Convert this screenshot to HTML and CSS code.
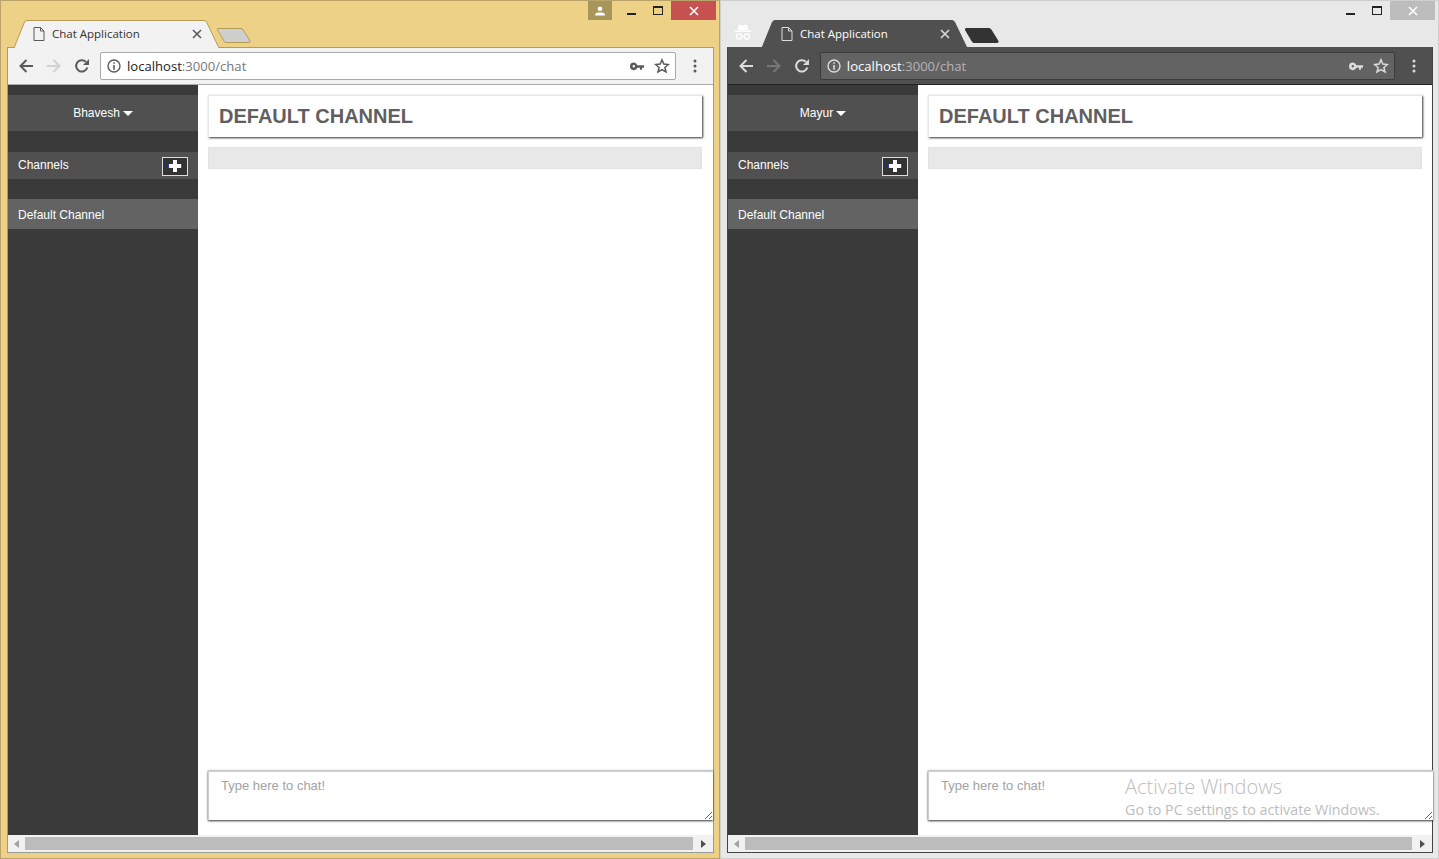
FILE: index.html
```html
<!DOCTYPE html>
<html lang="en">
<head>
  <meta charset="UTF-8" />
  <title>Chat Application</title>
  <link rel="stylesheet" href="styles.css">
</head>
<body>
  <svg class="defs" width="0" height="0">
    <symbol id="i-page" viewBox="0 0 12 14"><path d="M1 .5h6.500L11 4v9.500H1zM7.500.5V4H11" fill="none" stroke="currentColor"/></symbol>
    <symbol id="i-close" viewBox="0 0 10 10"><path d="M1 1l8 8M9 1l-8 8" fill="none" stroke="currentColor" stroke-width="1.600"/></symbol>
    <symbol id="i-back" viewBox="0 0 16 16"><path d="M15 8H3M8.500 2 2.500 8l6 6" fill="none" stroke="currentColor" stroke-width="2"/></symbol>
    <symbol id="i-forward" viewBox="0 0 16 16"><path d="M1 8h12M7.500 2l6 6-6 6" fill="none" stroke="currentColor" stroke-width="2"/></symbol>
    <symbol id="i-reload" viewBox="0 0 16 16"><path d="M13.300 9.500A5.700 5.700 0 1 1 11.800 3.800" fill="none" stroke="currentColor" stroke-width="2"/><path d="M9 7h6V1z" fill="currentColor"/></symbol>
    <symbol id="i-info" viewBox="0 0 14 14"><circle cx="7" cy="7" r="6" fill="none" stroke="currentColor" stroke-width="1.400"/><path d="M6.200 3.200h1.600v1.600H6.200zM6.200 6h1.600v4.800H6.200z" fill="currentColor"/></symbol>
    <symbol id="i-key" viewBox="0 0 14 9"><path d="M3.800.5a3.800 3.800 0 1 0 3.500 5.300H10v2h2v-2h2V3.300H7.300A3.800 3.800 0 0 0 3.800.5zm0 2.600a1.200 1.200 0 1 1 0 2.400 1.200 1.200 0 0 1 0-2.400z" fill="currentColor"/></symbol>
    <symbol id="i-star" viewBox="0 0 16 16"><path d="M8 1.800l1.800 4.300 4.600.4-3.500 3 1.100 4.500L8 11.600 4 14l1.100-4.500-3.500-3 4.600-.4z" fill="none" stroke="currentColor" stroke-width="1.500"/></symbol>
    <symbol id="i-menu" viewBox="0 0 4 14"><circle cx="2" cy="2" r="1.500" fill="currentColor"/><circle cx="2" cy="7" r="1.500" fill="currentColor"/><circle cx="2" cy="12" r="1.500" fill="currentColor"/></symbol>
    <symbol id="i-incognito" viewBox="0 0 16 16"><path d="M0 6.500h16V8H0zM2.500 6 4 .5l4 .8 4-.8L13.500 6z" fill="currentColor"/><circle cx="4" cy="12.500" r="2.700" fill="none" stroke="currentColor" stroke-width="1.300"/><circle cx="12" cy="12.500" r="2.700" fill="none" stroke="currentColor" stroke-width="1.300"/><path d="M6.500 12h3v1h-3z" fill="currentColor"/></symbol>
    <symbol id="i-person" viewBox="0 0 12 10"><circle cx="6" cy="2.700" r="2.300" fill="currentColor"/><path d="M1 9.500c0-2.500 2-3 5-3s5 .5 5 3z" fill="currentColor"/></symbol>
    <symbol id="i-plus" viewBox="0 0 14 14"><path d="M0 5h5V1h1v12H5V9H0z" fill="#2b35c8"/><path d="M14 5H9V1H8v12h1V9h5z" fill="#d22c2c"/><path d="M1 5h4V1h4v4h4v4H9v4H5V9H1z" fill="#fff"/></symbol>
  </svg>

  <div class="desktop">

    <div class="window light">
      <div class="titlebar">
        <div class="tab">
          <svg class="tab-shape" viewBox="0 0 205 28" width="205" height="28"><path d="M0 28 10.500 2Q11.300 .5 13 .5H190Q191.700 .5 192.500 2L205 28"/></svg>
          <svg class="tab-page" width="12" height="14"><use href="#i-page"/></svg>
          <span class="tab-title">Chat Application</span>
          <svg class="tab-close" width="10" height="10"><use href="#i-close"/></svg>
        </div>
        <svg class="newtab" viewBox="0 0 34 17" width="34" height="17"><path d="M1 1.500H24Q25.500 1.500 26.200 3L33 14Q33.600 15.500 32 15.500H9Q7.500 15.500 7 14L.5 3Q0 1.500 1 1.500z"/></svg>
        <div class="controls">
          <div class="ctl-profile"><svg width="12" height="10"><use href="#i-person"/></svg></div>
          <div class="ctl-min"><span></span></div>
          <div class="ctl-max"><span></span></div>
          <div class="ctl-close"><svg width="10" height="10"><use href="#i-close"/></svg></div>
        </div>
      </div>
      <div class="chrome">
        <div class="toolbar">
          <div class="tool"><svg width="16" height="16"><use href="#i-back"/></svg></div>
          <div class="tool tool-off"><svg width="16" height="16"><use href="#i-forward"/></svg></div>
          <div class="tool"><svg width="16" height="16"><use href="#i-reload"/></svg></div>
          <div class="omnibox">
            <svg class="omni-info" width="14" height="14"><use href="#i-info"/></svg>
            <span class="url"><b>localhost</b>:3000/chat</span>
            <svg class="omni-key" width="14" height="9"><use href="#i-key"/></svg>
            <svg class="omni-star" width="16" height="16"><use href="#i-star"/></svg>
          </div>
          <div class="tool-menu"><svg width="4" height="14"><use href="#i-menu"/></svg></div>
        </div>
        <div class="page">
          <aside class="sidebar">
            <div class="profile">Bhavesh <span class="caret"></span></div>
            <div class="channels-head">
              <span>Channels</span>
              <button class="add-btn"><svg width="14" height="14"><use href="#i-plus"/></svg></button>
            </div>
            <div class="channel">Default Channel</div>
          </aside>
          <main class="chat">
            <h3 class="chat-title">DEFAULT CHANNEL</h3>
            <div class="chat-notice"></div>
            <textarea class="chat-input" placeholder="Type here to chat!"></textarea>
          </main>
        </div>
        <div class="hscroll">
          <span class="arrow-left"></span>
          <div class="thumb"></div>
          <span class="arrow-right"></span>
        </div>
      </div>
    </div>

    <div class="window dark">
      <div class="titlebar">
        <svg class="incognito" width="16" height="16"><use href="#i-incognito"/></svg>
        <div class="tab">
          <svg class="tab-shape" viewBox="0 0 205 28" width="205" height="28"><path d="M0 28 10.500 2Q11.300 .5 13 .5H190Q191.700 .5 192.500 2L205 28"/></svg>
          <svg class="tab-page" width="12" height="14"><use href="#i-page"/></svg>
          <span class="tab-title">Chat Application</span>
          <svg class="tab-close" width="10" height="10"><use href="#i-close"/></svg>
        </div>
        <svg class="newtab" viewBox="0 0 34 17" width="34" height="17"><path d="M1 1.500H24Q25.500 1.500 26.200 3L33 14Q33.600 15.500 32 15.500H9Q7.500 15.500 7 14L.5 3Q0 1.500 1 1.500z"/></svg>
        <div class="controls">
          <div class="ctl-min"><span></span></div>
          <div class="ctl-max"><span></span></div>
          <div class="ctl-close"><svg width="10" height="10"><use href="#i-close"/></svg></div>
        </div>
      </div>
      <div class="chrome">
        <div class="toolbar">
          <div class="tool"><svg width="16" height="16"><use href="#i-back"/></svg></div>
          <div class="tool tool-off"><svg width="16" height="16"><use href="#i-forward"/></svg></div>
          <div class="tool"><svg width="16" height="16"><use href="#i-reload"/></svg></div>
          <div class="omnibox">
            <svg class="omni-info" width="14" height="14"><use href="#i-info"/></svg>
            <span class="url"><b>localhost</b>:3000/chat</span>
            <svg class="omni-key" width="14" height="9"><use href="#i-key"/></svg>
            <svg class="omni-star" width="16" height="16"><use href="#i-star"/></svg>
          </div>
          <div class="tool-menu"><svg width="4" height="14"><use href="#i-menu"/></svg></div>
        </div>
        <div class="page">
          <aside class="sidebar">
            <div class="profile">Mayur <span class="caret"></span></div>
            <div class="channels-head">
              <span>Channels</span>
              <button class="add-btn"><svg width="14" height="14"><use href="#i-plus"/></svg></button>
            </div>
            <div class="channel">Default Channel</div>
          </aside>
          <main class="chat">
            <h3 class="chat-title">DEFAULT CHANNEL</h3>
            <div class="chat-notice"></div>
            <textarea class="chat-input" placeholder="Type here to chat!"></textarea>
          </main>
        </div>
        <div class="hscroll">
          <span class="arrow-left"></span>
          <div class="thumb"></div>
          <span class="arrow-right"></span>
        </div>
      </div>
    </div>

    <div class="activate">
      <div class="activate-title">Activate Windows</div>
      <div class="activate-sub">Go to PC settings to activate Windows.</div>
    </div>
  </div>
</body>
</html>
```

FILE: styles.css
```css
* {
  box-sizing: border-box;
}
html, body {
  margin: 0;
  height: 859px;
  overflow: hidden;
}
body {
  font-family: "Liberation Sans", Arial, sans-serif;
  font-size: 12px;
}
.defs {
  position: absolute;
}
.desktop {
  position: relative;
  display: flex;
  width: 1439px;
  height: 859px;
}

/* window frame */
.window {
  width: 720px;
  height: 859px;
  padding: 0 5px 5px 6px;
  display: flex;
  flex-direction: column;
  border: 1px solid;
}
.window.dark {
  width: 719px;
}
.light {
  --frame: #edd187;
  --edge: #b9a36a;
  --tab: #f2f2f2;
  --tab-line: #b59b5a;
  --tab-text: #333;
  --newtab: #cfcfcf;
  --newtab-line: #b59b5a;
  --bar: #f2f2f2;
  --bar-line: #a9a9a9;
  --icon: #5a5a5a;
  --icon-off: #d2d2d2;
  --box: #fff;
  --box-line: #a9a9a9;
  --url: #777;
  --host: #222;
  --chrome-line: #b59b5a;
  --chrome-side: #9a9a9a;
  background: var(--frame);
  border-color: var(--edge);
}
.dark {
  --frame: #e8e8e8;
  --edge: #cfcfcf;
  --tab: #505050;
  --tab-line: #505050;
  --tab-text: #fff;
  --newtab: #333;
  --newtab-line: #333;
  --bar: #505050;
  --bar-line: #222;
  --icon: #dcdcdc;
  --icon-off: #787878;
  --box: #636363;
  --box-line: #3c3c3c;
  --url: #b5b5b5;
  --host: #fff;
  --chrome-line: #505050;
  --chrome-side: #444;
  background: var(--frame);
  border-color: var(--edge);
}

/* tab strip */
.titlebar {
  height: 46px;
  flex: none;
  display: flex;
  align-items: flex-start;
  padding-left: 7px;
}
.tab {
  position: relative;
  z-index: 1;
  width: 205px;
  height: 28px;
  margin-top: 19px;
  flex: none;
  display: flex;
  align-items: center;
  color: var(--tab-text);
}
.tab-shape {
  position: absolute;
  left: 0;
  top: 0;
}
.tab-shape path {
  fill: var(--tab);
  stroke: var(--tab-line);
}
.tab-page {
  position: relative;
  margin-left: 19px;
  color: var(--icon);
}
.tab-title {
  position: relative;
  margin: -2px 0 0 7px;
  font-family: "Open Sans", sans-serif;
  font-size: 11.5px;
  width: 127px;
  white-space: nowrap;
}
.tab-close {
  position: relative;
  margin-left: 13px;
  color: var(--icon);
}
.newtab {
  margin: 26px 0 0 -2px;
  flex: none;
}
.newtab path {
  fill: var(--newtab);
  stroke: var(--newtab-line);
}
.incognito {
  color: #fff;
  flex: none;
  margin: 23px 11px 0 8px;
}
.dark .titlebar {
  padding-left: 0;
}
.dark .incognito {
  margin-right: 11px;
}

/* min / max / close */
.controls {
  margin-left: auto;
  margin-right: -2px;
  display: flex;
  height: 19px;
  flex: none;
}
.controls > div {
  display: flex;
  align-items: center;
  justify-content: center;
  height: 19px;
}
.ctl-profile {
  width: 24px;
  background: #a8955a;
  color: #fff;
}
.ctl-min {
  width: 33px;
  padding-left: 5px;
}
.ctl-min span {
  width: 9px;
  height: 2px;
  margin-top: 7px;
  background: #222;
}
.ctl-max {
  width: 26px;
}
.ctl-max span {
  width: 10px;
  height: 9px;
  border: 1px solid #222;
  border-top-width: 2px;
}
.ctl-close {
  width: 45px;
  color: #fff;
}
.light .ctl-close {
  background: #c75050;
}
.dark .ctl-close {
  background: #bcbcbc;
}

/* browser chrome */
.chrome {
  flex: 1;
  min-height: 0;
  display: flex;
  flex-direction: column;
  border: 1px solid var(--chrome-side);
  border-top-color: var(--chrome-line);
}
.toolbar {
  height: 37px;
  flex: none;
  display: flex;
  align-items: center;
  padding-left: 4px;
  background: var(--bar);
  border-bottom: 1px solid var(--bar-line);
}
.tool {
  width: 28px;
  display: flex;
  justify-content: center;
  color: var(--icon);
}
.tool-off {
  color: var(--icon-off);
}
.omnibox {
  width: 576px;
  height: 28px;
  margin-left: 4px;
  display: flex;
  align-items: center;
  background: var(--box);
  border: 1px solid var(--box-line);
  border-radius: 2px;
  color: var(--icon);
}
.omni-info {
  margin-left: 6px;
}
.url {
  margin-left: 6px;
  font-family: "Open Sans", sans-serif;
  font-size: 13.1px;
  color: var(--url);
}
.url b {
  font-weight: 400;
  color: var(--host);
}
.omni-key {
  margin-left: auto;
}
.omni-star {
  margin: 0 5px 0 10px;
}
.tool-menu {
  width: 37px;
  display: flex;
  justify-content: center;
  color: var(--icon);
}

/* the chat page */
.page {
  flex: 1;
  min-height: 0;
  display: flex;
  background: #fff;
}
.sidebar {
  width: 190px;
  flex: none;
  padding-top: 10px;
  background: #3a3a3a;
  color: #fff;
}
.profile {
  height: 36px;
  display: flex;
  align-items: center;
  justify-content: center;
  gap: 3px;
  background: #505050;
}
.caret {
  width: 0;
  height: 0;
  margin-top: 1px;
  border-top: 5px solid #fff;
  border-left: 5px solid transparent;
  border-right: 5px solid transparent;
}
.channels-head {
  height: 27px;
  margin-top: 21px;
  padding: 0 10px;
  display: flex;
  align-items: center;
  justify-content: space-between;
  background: #505050;
}
.channels-head span {
  margin-bottom: 2px;
}
.add-btn {
  width: 26px;
  height: 19px;
  padding: 0;
  margin-top: 1px;
  display: flex;
  align-items: center;
  justify-content: center;
  background: #333;
  border: 1px solid #ddd;
}
.channel {
  height: 30px;
  margin-top: 20px;
  padding-left: 10px;
  line-height: 32px;
  background: #636363;
}
.chat {
  flex: 1;
  min-width: 0;
  padding: 10px 0 15px 10px;
  display: flex;
  flex-direction: column;
}
.chat-title {
  width: 494px;
  height: 42px;
  margin: 0;
  padding-left: 10px;
  font-size: 20px;
  line-height: 40px;
  font-weight: 700;
  color: #5f5f5f;
  background: #fff;
  border: 1px solid #e8e8e8;
  border-right: 0;
  border-bottom: 0;
  box-shadow: 1px 1px 2px #333;
}
.chat-notice {
  width: 494px;
  height: 22px;
  margin-top: 10px;
  background: #e8e8e8;
  border: 1px solid #e2e2e2;
}
.chat-input {
  width: 505px;
  height: 50px;
  margin-top: auto;
  padding: 6px 12px;
  flex: none;
  font-family: "Liberation Sans", Arial, sans-serif;
  font-size: 13px;
  border: 1px solid #ccc;
  border-top-width: 2px;
  border-right: 0;
  border-bottom: 0;
  border-radius: 0;
  outline: none;
  box-shadow: 0 1px 2px #333;
}
.chat-input::placeholder {
  color: #a3a3a3;
}

/* horizontal scrollbar */
.hscroll {
  height: 17px;
  flex: none;
  display: flex;
  align-items: center;
  background: #f1f1f1;
}
.thumb {
  flex: 1;
  height: 13px;
  background: #bcbcbc;
}
.arrow-left, .arrow-right {
  width: 0;
  height: 0;
  border-top: 4px solid transparent;
  border-bottom: 4px solid transparent;
}
.arrow-left {
  margin: 0 6px 0 6px;
  border-right: 5px solid #a3a3a3;
}
.arrow-right {
  margin: 0 7px 0 8px;
  border-left: 5px solid #505050;
}

/* windows watermark */
.activate {
  position: absolute;
  left: 1125px;
  top: 773px;
  color: #bdbdbd;
  font-family: "Open Sans", sans-serif;
  font-weight: 300;
  pointer-events: none;
}
.activate-title {
  font-size: 20px;
  line-height: 27px;
}
.activate-sub {
  font-size: 14.3px;
  line-height: 19px;
  font-weight: 400;
}
```
